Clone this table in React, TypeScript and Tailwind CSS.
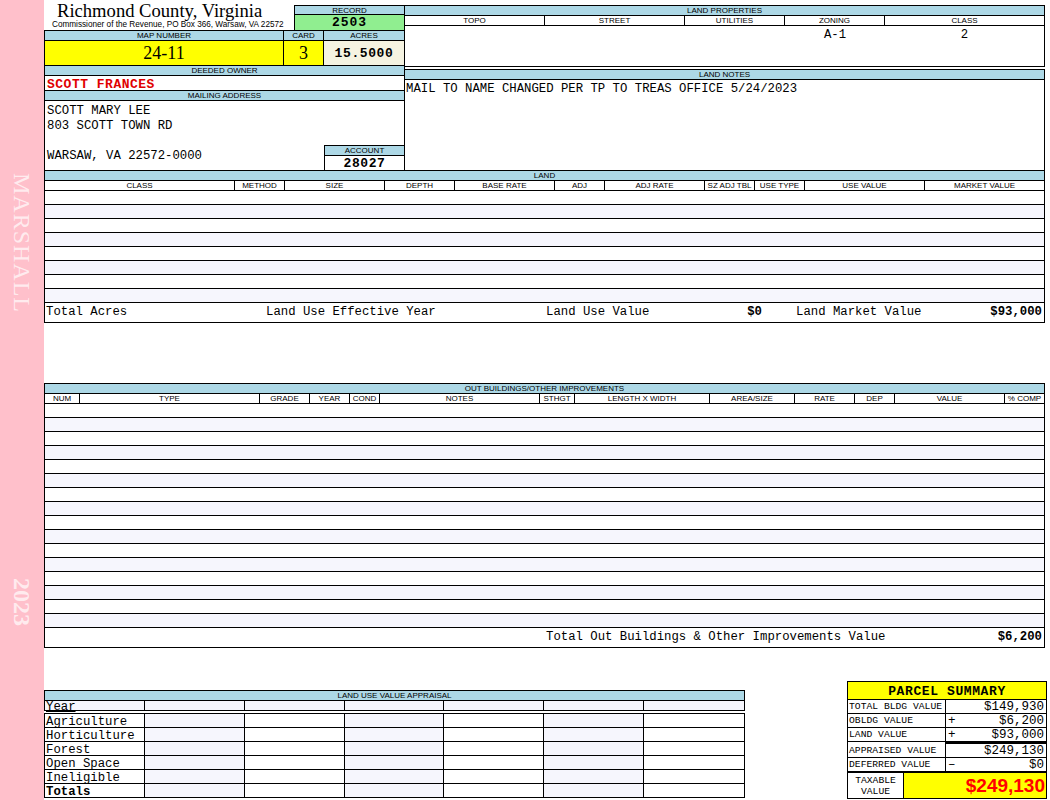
const MONO = "font-['Liberation_Mono','Courier_New',monospace]";
const SANS = "font-['Liberation_Sans',Arial,sans-serif]";
const SERIF = "font-['Liberation_Serif','Times_New_Roman',serif]";
const LBL =
  "font-['Liberation_Sans',Arial,sans-serif] text-[8px] uppercase text-center whitespace-nowrap overflow-hidden";
const BLUE = "bg-[#add8e6]";

const landCols = [
  { label: "Class", w: "w-[190px] border-r" },
  { label: "Method", w: "w-[50px] border-r" },
  { label: "Size", w: "w-[100px] border-r" },
  { label: "Depth", w: "w-[70px] border-r" },
  { label: "Base Rate", w: "w-[100px] border-r" },
  { label: "Adj", w: "w-[50px] border-r" },
  { label: "Adj Rate", w: "w-[100px] border-r" },
  { label: "SZ Adj Tbl", w: "w-[50px] border-r" },
  { label: "Use Type", w: "w-[50px] border-r" },
  { label: "Use Value", w: "w-[120px] border-r" },
  { label: "Market Value", w: "flex-1" },
];

const obCols = [
  { label: "Num", w: "w-[35px] border-r" },
  { label: "Type", w: "w-[180px] border-r" },
  { label: "Grade", w: "w-[50px] border-r" },
  { label: "Year", w: "w-[40px] border-r" },
  { label: "Cond", w: "w-[30px] border-r" },
  { label: "Notes", w: "w-[160px] border-r" },
  { label: "Sthgt", w: "w-[35px] border-r" },
  { label: "Length X Width", w: "w-[135px] border-r" },
  { label: "Area/Size", w: "w-[85px] border-r" },
  { label: "Rate", w: "w-[60px] border-r" },
  { label: "Dep", w: "w-[40px] border-r" },
  { label: "Value", w: "w-[110px] border-r" },
  { label: "% Comp", w: "flex-1" },
];

const propCols = [
  { label: "Topo", value: "", w: "w-[140px]" },
  { label: "Street", value: "", w: "w-[140px]" },
  { label: "Utilities", value: "", w: "w-[100px]" },
  { label: "Zoning", value: "A-1", w: "w-[100px]" },
  { label: "Class", value: "2", w: "flex-1" },
];

const useRows = ["Agriculture", "Horticulture", "Forest", "Open Space", "Ineligible", "Totals"];

function Sidebar() {
  return (
    <div className="flex h-[800px] w-[44px] shrink-0 flex-col items-center bg-[#ffc0cb] pt-[173px] pb-[174px]">
      <span className={`${SERIF} text-[24px] leading-[24px] tracking-[1px] text-white/70 [writing-mode:vertical-rl]`}>
        MARSHALL
      </span>
      <span className={`${SERIF} mt-auto text-[24px] font-bold leading-[24px] text-white/70 [writing-mode:vertical-rl]`}>
        2023
      </span>
    </div>
  );
}

function TopSection() {
  return (
    <div className="flex h-[170px] w-[1001px]">
      <div className="flex w-[360px] flex-col">
        <div className="flex h-[30px]">
          <div className="w-[250px] pt-[2px]">
            <div className={`${SERIF} pl-[13px] text-[18.6px] leading-[18px] whitespace-nowrap`}>Richmond County, Virginia</div>
            <div className={`${SANS} pl-[8px] text-[8.2px] leading-[9px] whitespace-nowrap`}>
              Commissioner of the Revenue, PO Box 366, Warsaw, VA 22572
            </div>
          </div>
          <div className="flex flex-1 flex-col pt-[5px]">
            <div className={`${LBL} ${BLUE} h-[10px] border-t border-l border-black leading-[9px]`}>Record</div>
            <div className={`${MONO} flex-1 border-t border-l border-black bg-[#90ee90] text-center text-[13px] font-bold leading-[15px] tracking-[1px]`}>
              2503
            </div>
          </div>
        </div>

        <div className={`flex h-[10px] border-t border-l border-black ${BLUE}`}>
          <div className={`${LBL} w-[239px] border-r border-black leading-[9px]`}>Map Number</div>
          <div className={`${LBL} w-[40px] border-r border-black leading-[9px]`}>Card</div>
          <div className={`${LBL} flex-1 leading-[9px]`}>Acres</div>
        </div>
        <div className="flex h-[25px] border-t border-l border-black">
          <div className={`${SERIF} w-[239px] border-r border-black bg-[#ffff00] text-center text-[18px] leading-[24px]`}>24-11</div>
          <div className={`${SERIF} w-[40px] border-r border-black bg-[#ffff00] text-center text-[18px] leading-[24px]`}>3</div>
          <div className={`${MONO} flex-1 bg-[#f5f3e1] text-center text-[13px] font-bold leading-[25px] tracking-[0.6px]`}>15.5000</div>
        </div>
        <div className={`${LBL} ${BLUE} h-[10px] border-t border-l border-black leading-[9px]`}>Deeded Owner</div>
        <div className={`${MONO} h-[15px] border-t border-l border-black pl-[2px] text-[13px] font-bold leading-[17px] tracking-[0.5px] text-[#e00000]`}>
          SCOTT FRANCES
        </div>
        <div className={`${LBL} ${BLUE} h-[10px] border-t border-l border-black leading-[9px]`}>Mailing Address</div>
        <div className="flex flex-1 border-t border-l border-black">
          <div className={`${MONO} flex-1 pt-[3px] pl-[2px] text-[12.3px] leading-[15px]`}>
            <div>SCOTT MARY LEE</div>
            <div>803 SCOTT TOWN RD</div>
            <div>&nbsp;</div>
            <div>WARSAW, VA 22572-0000</div>
          </div>
          <div className="flex w-[80px] flex-col justify-end">
            <div className={`${LBL} ${BLUE} h-[10px] border-t border-l border-black leading-[9px]`}>Account</div>
            <div className={`${MONO} h-[15px] border-t border-l border-black text-center text-[13px] font-bold leading-[15px] tracking-[0.6px]`}>
              28027
            </div>
          </div>
        </div>
      </div>

      <div className="mt-[5px] flex w-[641px] flex-col border-l border-black">
        <div className="flex h-[62px] flex-col border-t border-r border-b border-black">
          <div className={`${LBL} ${BLUE} h-[10px] border-b border-black leading-[9px]`}>Land Properties</div>
          <div className="flex h-[10px] border-b border-black">
            {propCols.map((c, i) => (
              <div key={c.label} className={`${LBL} ${c.w} leading-[9px] ${i < 4 ? "border-r border-black" : ""}`}>
                {c.label}
              </div>
            ))}
          </div>
          <div className="flex pt-[2px]">
            {propCols.map((c) => (
              <div key={c.label} className={`${MONO} ${c.w} text-center text-[12.3px] leading-[15px]`}>
                {c.value}
              </div>
            ))}
          </div>
        </div>
        <div className="mt-[2px] flex flex-1 flex-col border-t border-r border-black">
          <div className={`${LBL} ${BLUE} h-[10px] border-b border-black leading-[9px]`}>Land Notes</div>
          <div className={`${MONO} pt-[2px] pl-[1px] text-[12.3px] leading-[15px] whitespace-nowrap`}>
            MAIL TO NAME CHANGED PER TP TO TREAS OFFICE 5/24/2023
          </div>
        </div>
      </div>
    </div>
  );
}

function Rows({ count }: { count: number }) {
  return (
    <>
      {Array.from({ length: count }).map((_, i) => (
        <div key={i} className={`h-[14px] border-b border-black ${i % 2 ? "bg-[#f6f6fd]" : "bg-white"}`} />
      ))}
    </>
  );
}

function LandTable() {
  return (
    <div className="w-[1001px] border-x border-t border-black">
      <div className={`${LBL} ${BLUE} h-[10px] border-b border-black leading-[9px]`}>Land</div>
      <div className="flex h-[10px] border-b border-black">
        {landCols.map((c) => (
          <div key={c.label} className={`${LBL} ${c.w} border-black leading-[9px]`}>
            {c.label}
          </div>
        ))}
      </div>
      <Rows count={8} />
      <div className={`${MONO} flex h-[20px] items-center border-b border-black pl-[1px] pr-[2px] text-[12.3px] whitespace-nowrap`}>
        <span className="w-[220px]">Total Acres</span>
        <span className="w-[280px]">Land Use Effective Year</span>
        <span className="flex w-[216px] justify-between">
          <span>Land Use Value</span>
          <span className="font-bold">$0</span>
        </span>
        <span className="ml-[34px] flex flex-1 justify-between">
          <span>Land Market Value</span>
          <span className="font-bold">$93,000</span>
        </span>
      </div>
    </div>
  );
}

function OutBuildings() {
  return (
    <div className="mt-[60px] w-[1001px] border-x border-t border-black">
      <div className={`${LBL} ${BLUE} h-[10px] border-b border-black leading-[9px]`}>Out Buildings/Other Improvements</div>
      <div className="flex h-[10px] border-b border-black">
        {obCols.map((c) => (
          <div key={c.label} className={`${LBL} ${c.w} border-black leading-[9px]`}>
            {c.label}
          </div>
        ))}
      </div>
      <Rows count={16} />
      <div className={`${MONO} flex h-[20px] items-center justify-between border-b border-black pl-[501px] pr-[2px] text-[12.3px] whitespace-nowrap`}>
        <span>Total Out Buildings &amp; Other Improvements Value</span>
        <span className="font-bold">$6,200</span>
      </div>
    </div>
  );
}

function UseCells({ tint }: { tint?: boolean }) {
  return (
    <>
      {[0, 1, 2, 3, 4, 5].map((j) => (
        <div
          key={j}
          className={`w-[100px] ${j < 5 ? "border-r" : ""} border-black ${tint || j % 2 === 0 ? "bg-[#f6f6fd]" : "bg-white"}`}
        />
      ))}
    </>
  );
}

function LandUseAppraisal() {
  return (
    <div className="mt-[42px] w-[701px]">
      <div className="border-x border-t border-black">
        <div className={`${LBL} ${BLUE} h-[10px] border-b border-black leading-[9px]`}>Land Use Value Appraisal</div>
        <div className="flex h-[10px] border-b border-black bg-[#f6f6fd]">
          <div className={`${MONO} w-[100px] border-r border-black pl-[1px] text-[12.3px] leading-[12px] underline`}>Year</div>
          <UseCells tint />
        </div>
      </div>
      <div className="mt-[2px] border-x border-t border-black">
        {useRows.map((r) => (
          <div key={r} className="flex h-[14px] border-b border-black">
            <div
              className={`${MONO} w-[100px] border-r border-black pl-[1px] text-[12.3px] leading-[16px] ${r === "Totals" ? "font-bold" : ""}`}
            >
              {r}
            </div>
            <UseCells />
          </div>
        ))}
      </div>
    </div>
  );
}

const summary = [
  { label: "TOTAL BLDG VALUE", sign: "", value: "$149,930" },
  { label: "OBLDG VALUE", sign: "+", value: "$6,200" },
  { label: "LAND VALUE", sign: "+", value: "$93,000" },
];

function SummaryRow({ label, sign, value }: { label: string; sign: string; value: string }) {
  return (
    <div className="flex h-[14px] border-b border-black">
      <div className={`${MONO} w-[98px] border-r border-black pl-[1px] text-[9.7px] leading-[14px] whitespace-nowrap`}>{label}</div>
      <div className={`${MONO} flex flex-1 justify-between px-[2px] text-[12.5px] leading-[15px]`}>
        <span>{sign}</span>
        <span>{value}</span>
      </div>
    </div>
  );
}

function ParcelSummary() {
  return (
    <div className="mt-[33px] ml-[102px] w-[200px] border border-black">
      <div className={`${MONO} h-[18px] border-b border-black bg-[#ffff00] text-center text-[13px] font-bold leading-[19px] tracking-[0.6px]`}>
        PARCEL SUMMARY
      </div>
      {summary.map((s) => (
        <SummaryRow key={s.label} {...s} />
      ))}
      <div className="flex h-[2px]">
        <div className="w-[98px] border-r border-black" />
        <div className="flex-1 bg-black" />
      </div>
      <SummaryRow label="APPRAISED VALUE" sign="" value="$249,130" />
      <SummaryRow label="DEFERRED VALUE" sign="–" value="$0" />
      <div className="flex h-[26px] border-t border-black">
        <div className={`${MONO} flex w-[56px] flex-col items-center justify-center border-r border-black text-[9.7px] leading-[11px]`}>
          <span>TAXABLE</span>
          <span>VALUE</span>
        </div>
        <div className={`${SANS} flex-1 bg-[#ffff00] pr-[1px] text-right text-[19px] font-bold leading-[25px] text-[#f00]`}>
          $249,130
        </div>
      </div>
    </div>
  );
}

export default function App() {
  return (
    <div className="flex h-[800px] w-[1050px] overflow-hidden bg-white text-black">
      <Sidebar />
      <div className="flex w-[1006px] flex-col">
        <TopSection />
        <LandTable />
        <OutBuildings />
        <div className="flex items-start">
          <LandUseAppraisal />
          <ParcelSummary />
        </div>
      </div>
    </div>
  );
}
